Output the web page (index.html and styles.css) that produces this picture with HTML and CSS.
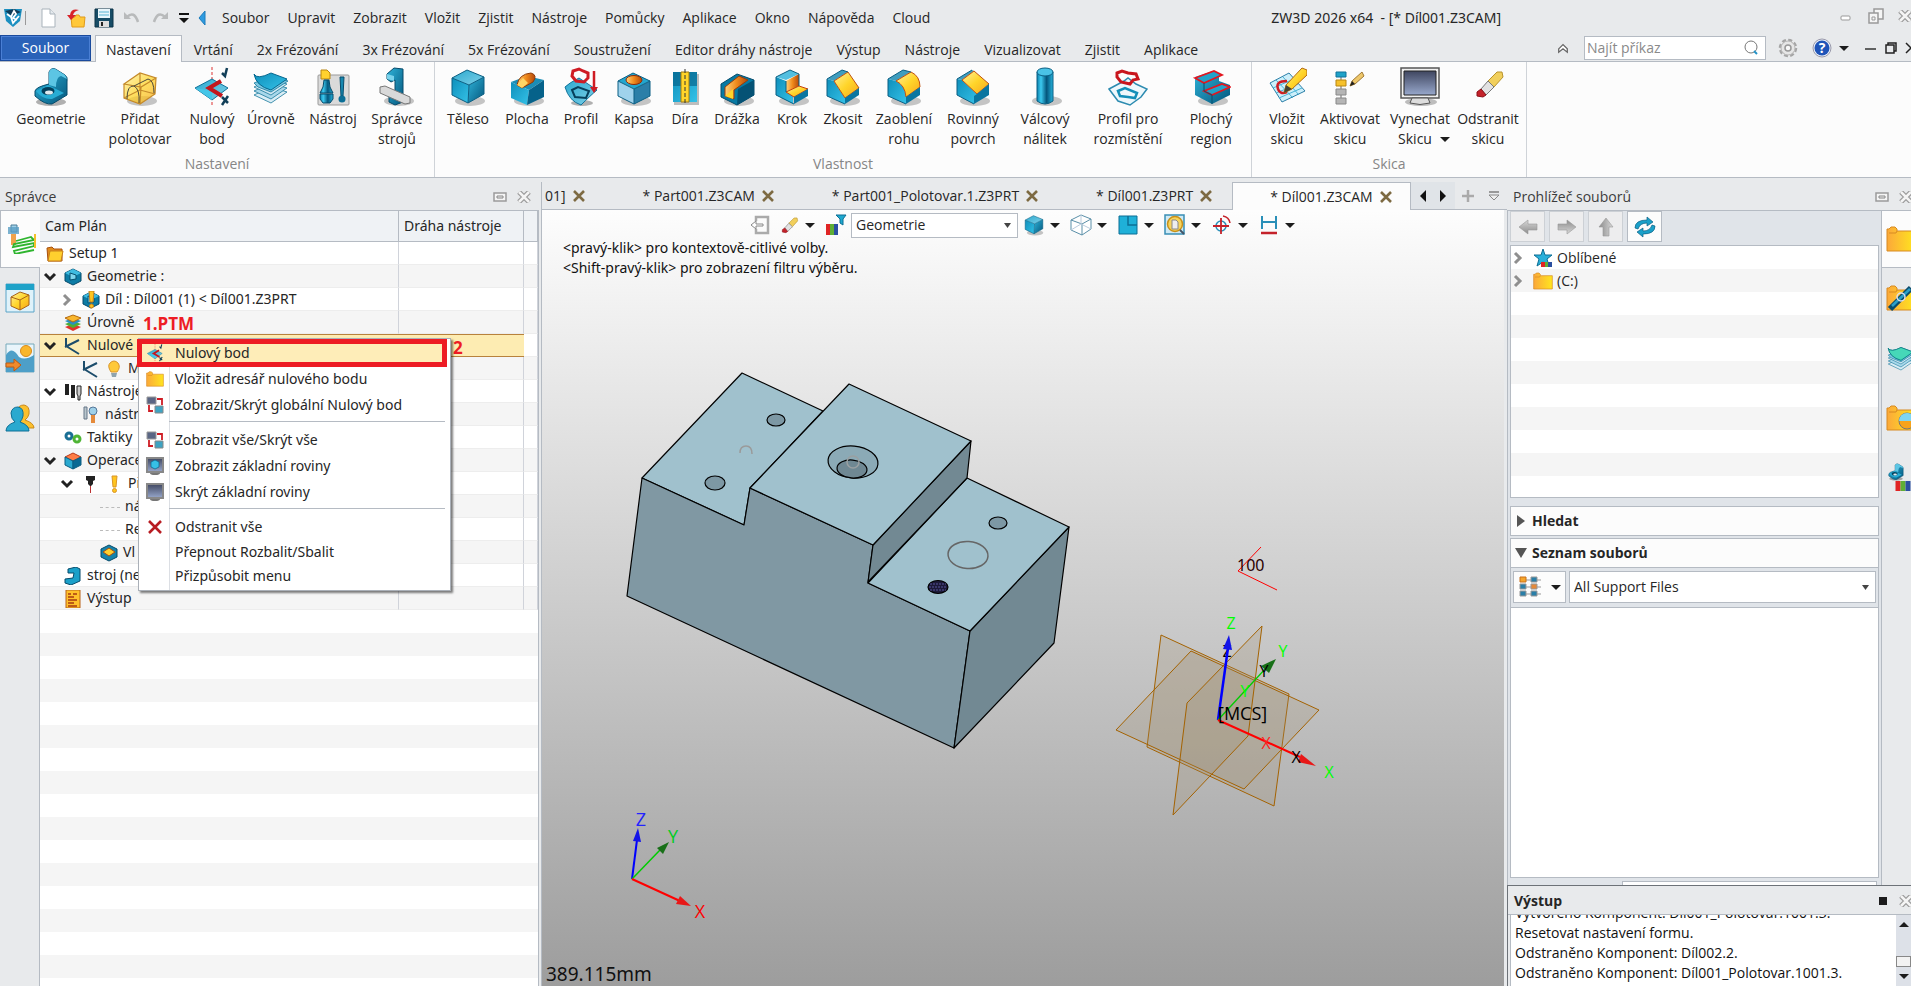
FILE: index.html
```html
<!DOCTYPE html>
<html lang="cs">
<head>
<meta charset="utf-8">
<title>ZW3D 2026 x64 - [* Díl001.Z3CAM]</title>
<link rel="stylesheet" href="styles.css">
</head>
<body>
<svg class="sprite" aria-hidden="true">
  <defs>
    <linearGradient id="gTop" x1="0" y1="0" x2="1" y2="1"><stop offset="0" stop-color="#2aa9cf"/><stop offset="1" stop-color="#7fd0e8"/></linearGradient>
    <linearGradient id="gL" x1="0" y1="0" x2="1" y2="1"><stop offset="0" stop-color="#0e8fbb"/><stop offset="1" stop-color="#35c2e8"/></linearGradient>
    <linearGradient id="gR" x1="0" y1="0" x2="1" y2="1"><stop offset="0" stop-color="#2fb4da"/><stop offset="1" stop-color="#04567c"/></linearGradient>
    <linearGradient id="gY" x1="0" y1="0" x2="1" y2="1"><stop offset="0" stop-color="#fff0a0"/><stop offset=".5" stop-color="#ffd52a"/><stop offset="1" stop-color="#f7a61c"/></linearGradient>
    <linearGradient id="gO" x1="0" y1="0" x2="1" y2="0"><stop offset="0" stop-color="#ffd27a"/><stop offset=".5" stop-color="#f08a1c"/><stop offset="1" stop-color="#b5480a"/></linearGradient>
    <linearGradient id="gF" x1="0" y1="0" x2="1" y2="0"><stop offset="0" stop-color="#fba83a"/><stop offset="1" stop-color="#ffe51f"/></linearGradient>
    <linearGradient id="gCyl" x1="0" y1="0" x2="1" y2="0"><stop offset="0" stop-color="#0a7fab"/><stop offset=".25" stop-color="#3ccaf0"/><stop offset=".6" stop-color="#04567c"/><stop offset="1" stop-color="#25b2dc"/></linearGradient>
    <linearGradient id="gM" x1="0" y1="0" x2="0" y2="1"><stop offset="0" stop-color="#3f4660"/><stop offset="1" stop-color="#98a8cc"/></linearGradient>
    <linearGradient id="gG" x1="0" y1="0" x2="0" y2="1"><stop offset="0" stop-color="#d8d8d8"/><stop offset="1" stop-color="#8c8c8c"/></linearGradient>
  </defs>
  <symbol id="shadow" viewBox="0 0 40 40"><ellipse cx="22" cy="34" rx="15" ry="5" fill="#000" opacity=".22"/></symbol>
  <symbol id="cube" viewBox="0 0 40 40"><use href="#shadow"/><path d="M4 11 19 3 36 10 21 18Z" fill="url(#gTop)"/><path d="M4 11 21 18 20 36 4 28Z" fill="url(#gL)"/><path d="M21 18 36 10 36 27 20 36Z" fill="url(#gR)"/><path d="M4 11 19 3 36 10 36 27 20 36 4 28ZM4 11 21 18 36 10M21 18 20 36" fill="none" stroke="#0b5f83" stroke-width="1"/></symbol>
  <symbol id="bracket" viewBox="0 0 40 40"><ellipse cx="20" cy="35" rx="15" ry="4" fill="#000" opacity=".3"/><path d="M18 17V5Q21 -1 26 3L34 8Q37 10 36 15V28L21 37Q14 38 4 29V24Q5 20 18 17Z" fill="url(#gR)" stroke="#064b6b"/><path d="M18 5Q21 -1 26 3L34 8 36 12 30 9Q25 10 25 20L18 18Z" fill="#5cc5e4"/><path d="M5 24 17 18 33 26 21 32Q12 33 5 24Z" fill="#27acd4"/><ellipse cx="17" cy="24" rx="6.500" ry="4" fill="#04405c"/><ellipse cx="18" cy="25.500" rx="4" ry="2" fill="#dfe9ee"/></symbol>
  <symbol id="stock" viewBox="0 0 40 40"><use href="#shadow"/><path d="M4 17 20 6 36 11 35 27 20 37 4 31Z" fill="url(#gY)" opacity=".75"/><path d="M4 17 20 6 36 11 21 20ZM4 17V31L20 37 35 27 36 11M21 20 20 37M20 6V23L4 31M20 23 35 27" fill="none" stroke="#c58a2a" stroke-width="1.200"/><path d="M7 32Q7 18 14 19 20 22 19 36M14 19 28 12Q34 13 34 26" fill="none" stroke="#4c4a3c"/></symbol>
  <symbol id="origin" viewBox="0 0 40 40"><path d="M20 0V40" stroke="#d33" stroke-dasharray="3 2"/><path d="M3 21 20 12 36 21 20 33Z" fill="url(#gTop)" stroke="#11739b"/><path d="M3 21 20 33V24Z" fill="#45c6e8"/><path d="M29 14 17 21 30 29" fill="none" stroke="#c4161c" stroke-width="4"/><path d="M30 6 33 9 35 1M30 30 36 36M36 29 30 38" fill="none" stroke="#123f58" stroke-width="2.500"/></symbol>
  <symbol id="levels" viewBox="0 0 40 40"><g stroke="#19789c" stroke-width=".8"><path d="M3 28 20 20 36 25 20 36Z" fill="#d9edf5"/><path d="M3 24 20 16 36 21 20 32Z" fill="#a9d8ea"/><path d="M3 20 20 12 36 17 20 28Z" fill="#cfe8f2"/><path d="M3 16 20 9 37 14 20 25 7 20Z" fill="#7cc7e0"/></g><path d="M3 7Q6 13 20 6L36 12 20 23Q5 19 3 7Z" fill="url(#gL)" stroke="#06688f"/></symbol>
  <symbol id="toolset" viewBox="0 0 40 40"><rect x="5" y="8" width="31" height="30" rx="1" fill="#dadada" stroke="#999"/><path d="M8 3H14L17 6V12H8Z" fill="#ffd22e" stroke="#b88612"/><path d="M11 13H16L17 20 20 26H7L10 20ZM7 27H20V32L17 36H10L7 32Z" fill="url(#gCyl)" stroke="#064b6b"/><path d="M27 10H31L30 29H28Z" fill="#1788b0" stroke="#064b6b"/><circle cx="29" cy="32" r="3.500" fill="#0b6e96"/></symbol>
  <symbol id="machine" viewBox="0 0 40 40"><use href="#shadow"/><path d="M10 7 17 1 26 2V35L18 38 12 35V29H18V13L14 15 10 12Z" fill="url(#gR)" stroke="#064b6b"/><path d="M10 7 17 9V14L10 12Z" fill="#7ad3ec"/><path d="M3 20 8 19 33 30V36L28 37 3 26Z" fill="#d9d9d9" stroke="#777"/></symbol>
  <symbol id="surf" viewBox="0 0 40 40"><use href="#shadow"/><path d="M4 15 20 9 37 13 22 23Z" fill="#1b8db5"/><path d="M4 15 22 23 20 38 4 31Z" fill="url(#gL)"/><path d="M22 23 37 13V30L20 38Z" fill="#06628a"/><path d="M10 18Q12 7 24 6 31 8 26 15L15 21Z" fill="url(#gO)" stroke="#8d3a08"/><path d="M10 18 16 11 21 16 15 21Z" fill="#ffd564"/></symbol>
  <symbol id="profile" viewBox="0 0 40 40"><ellipse cx="21" cy="36" rx="11" ry="3" fill="#000" opacity=".3"/><path d="M4 20Q8 16 18 11L36 23Q30 28 20 38 8 34 4 20Z" fill="url(#gTop)" stroke="#11739b"/><path d="M11 23 17 20 28 24 25 31 14 30Z" fill="none" stroke="#06405c" stroke-width="2"/><path d="M12 4 18 2 22 4 27 6 27 11 23 15 15 14 11 9Z" fill="none" stroke="#cf1c24" stroke-width="3"/><path d="M33 4V21" stroke="#cf1c24" stroke-width="2.500"/><path d="M29 20H37L33 26Z" fill="#cf1c24"/></symbol>
  <symbol id="pocket" viewBox="0 0 40 40"><use href="#shadow"/><path d="M4 14 19 6 36 14 20 22Z" fill="#23a6ce"/><path d="M4 14 20 22V37L4 29Z" fill="#9fd2ec"/><path d="M20 22 36 14V29L20 37Z" fill="#2b7fa8"/><path d="M4 14 19 6 36 14 20 22ZV29L20 37 36 29V14M20 22V37" fill="none" stroke="#0b5f83"/><ellipse cx="20" cy="13" rx="8" ry="4.500" fill="url(#gO)" stroke="#8d2a08"/></symbol>
  <symbol id="hole" viewBox="0 0 40 40"><rect x="9" y="7" width="25" height="31" fill="#000" opacity=".25"/><path d="M8 5H32V35H8Z" fill="url(#gL)"/><path d="M8 5H32V19H8Z" fill="#06628a" opacity=".65"/><path d="M16 5H24V35H16Z" fill="#ffd52a" stroke="#a37a10"/><path d="M20 2V38" stroke="#333" stroke-dasharray="4 2"/></symbol>
  <symbol id="slot" viewBox="0 0 40 40"><use href="#shadow"/><path d="M4 17 20 7 37 13V28L20 38 4 30Z" fill="#087aa3" stroke="#064b6b"/><path d="M21 22 37 13V28L20 38Z" fill="#055275"/><path d="M8 20 22 9 31 13 17 23V32L8 29Z" fill="url(#gO)" stroke="#9c3c08"/><path d="M8 29 16 22V32Z" fill="#ffd52a"/></symbol>
  <symbol id="step" viewBox="0 0 40 40"><use href="#shadow"/><path d="M4 10 18 3 27 7 14 13Z" fill="#52bfe0"/><path d="M4 10 14 14V25L21 29V37L4 28Z" fill="url(#gL)"/><path d="M14 14 27 7V19L14 25Z" fill="url(#gO)"/><path d="M14 25 27 19 36 22 22 30Z" fill="url(#gY)" stroke="#c4400c"/><path d="M22 30 36 22V29L22 37Z" fill="#0a76a0"/><path d="M4 10 18 3 27 7V19M14 14V25M4 10V28L22 37" fill="none" stroke="#0b5f83"/></symbol>
  <symbol id="chamfer" viewBox="0 0 40 40"><use href="#shadow"/><path d="M4 12 19 3 25 5 11 14Z" fill="#3f9dbe"/><path d="M4 12 11 14 22 31V37L4 29Z" fill="url(#gL)"/><path d="M11 14 25 5 36 21 22 31Z" fill="url(#gY)" stroke="#c0500f"/><path d="M22 31 36 21V28L22 37Z" fill="#0a76a0"/><path d="M4 12 19 3 25 5M4 12V29L22 37" fill="none" stroke="#0b5f83"/></symbol>
  <symbol id="fillet" viewBox="0 0 40 40"><use href="#shadow"/><path d="M4 12 19 3 27 5 12 14Z" fill="#3f9dbe"/><path d="M4 12 12 14Q21 18 22 29V37L4 29Z" fill="url(#gL)"/><path d="M12 14 27 5Q36 9 36 20L22 30Q21 18 12 14Z" fill="url(#gY)" stroke="#c0500f"/><path d="M22 30 36 20V28L22 37Z" fill="#0a76a0"/><path d="M4 12 19 3 27 5M4 12V29L22 37" fill="none" stroke="#0b5f83"/></symbol>
  <symbol id="planar" viewBox="0 0 40 40"><use href="#shadow"/><path d="M4 12 19 3 21 4 9 13Z" fill="#3f9dbe"/><path d="M4 12 9 13 25 28 21 37 4 28Z" fill="url(#gL)"/><path d="M9 13 21 4 36 17 24 27Z" fill="url(#gY)" stroke="#c0500f"/><path d="M24 27 36 17V28L21 37V29Z" fill="#0a76a0"/><path d="M4 12 19 3M4 12V28L21 37" fill="none" stroke="#0b5f83"/></symbol>
  <symbol id="boss" viewBox="0 0 40 40"><use href="#shadow"/><path d="M12 5V34Q20 40 28 34V5Z" fill="url(#gCyl)" stroke="#0b5f83"/><ellipse cx="20" cy="5" rx="8" ry="4" fill="#4ac3e6" stroke="#0b5f83"/></symbol>
  <symbol id="pattern" viewBox="0 0 40 40"><path d="M1 22 16 14 20 11 28 17 39 22 33 30 22 38 10 34Z" fill="#eef8fc" stroke="#2c8bb0" stroke-width="1.500"/><path d="M10 24 17 21 29 26 27 31 20 30 12 29Z" fill="none" stroke="#138fb8" stroke-width="2.500"/><path d="M9 6 14 4 20 6 28 7 30 12 25 13 22 17 13 15 9 10Z" fill="none" stroke="#c9161d" stroke-width="3"/></symbol>
  <symbol id="flat" viewBox="0 0 40 40"><use href="#shadow"/><path d="M4 10V28L21 37 39 28V18L28 14V8L22 4Z" fill="url(#gR)"/><path d="M4 11 23 4 31 8 13 16ZM13 24 31 17 39 20 21 28Z" fill="#23a3c9" stroke="#e3161f" stroke-width="1.800"/><path d="M13 16V24L21 28V37" fill="none" stroke="#07506f"/></symbol>
  <symbol id="insertsk" viewBox="0 0 40 40"><path d="M3 16 22 6 38 24 15 35Z" fill="#cdeffa" stroke="#2b7fa8"/><path d="M9 13 26 31M16 10 32 28M6 21 27 12M9 26 31 17M12 31 35 21" stroke="#49b4d6" fill="none"/><path d="M20 14Q8 14 11 22 13 28 20 25" fill="none" stroke="#cf1c24" stroke-width="2.500"/><path d="M17 26 19 18 35 1 40 3V8L25 22Z" fill="url(#gY)" stroke="#b46a10"/><path d="M17 26 19 18 25 22Z" fill="#443"/></symbol>
  <symbol id="activesk" viewBox="0 0 40 40"><path d="M11 8V36" stroke="#666"/><path d="M6 5H16V10H6Z" fill="#1fa2c8" stroke="#11739b"/><path d="M6 13H16V19H6Z" fill="#f6c12b" stroke="#b88612"/><path d="M6 22H16V28H6ZM6 31H16V37H6Z" fill="#b5b5b5" stroke="#888"/><path d="M20 19 22 14 32 5 34 9 25 17Z" fill="#eec76a" stroke="#a07a35"/><path d="M20 19 22 14 25 17Z" fill="#222"/></symbol>
  <symbol id="monitor" viewBox="0 0 40 40"><ellipse cx="21" cy="35" rx="16" ry="4" fill="#000" opacity=".25"/><path d="M1 1H39V31H1Z" fill="#f0f0f0" stroke="#555" stroke-width="1.500"/><path d="M4 4H36V28H4Z" fill="url(#gM)" stroke="#222"/><path d="M12 31H28L30 36Q20 39 10 36Z" fill="#ddd" stroke="#555"/></symbol>
  <symbol id="eraser" viewBox="0 0 40 40"><path d="M20 14 29 5 34 5 35 10 26 20Z" fill="#f1cf5c" stroke="#b9932d"/><path d="M13 22 20 14 26 20 18 28Z" fill="#e2e2e2" stroke="#777"/><path d="M13 22 18 28 15 30 9 29 9 25Z" fill="#c4222a" stroke="#8d1018"/></symbol>
  <symbol id="folder" viewBox="0 0 30 26"><path d="M1 3H3L5 1H9L11 3V5H29V25H1Z" fill="url(#gF)" stroke="#d78a22"/><path d="M3 7H10L11 5" fill="none" stroke="#d78a22"/></symbol>
  <symbol id="xclose" viewBox="0 0 14 12"><path d="M2 1 12 11M12 1 2 11" stroke="#9b9b9b" stroke-width="5"/><path d="M2 1 12 11M12 1 2 11" stroke="#f4f4f4" stroke-width="2.500"/></symbol>
  <symbol id="pin" viewBox="0 0 14 10"><path d="M1 1H13V9H1Z" fill="#f5f5f5" stroke="#9b9b9b" stroke-width="1.500"/><path d="M4 4H10V6H4Z" fill="#eee" stroke="#888"/></symbol>
  <symbol id="tabx" viewBox="0 0 12 12"><path d="M1 1 11 11M11 1 1 11" stroke="#7d6a42" stroke-width="2.600"/></symbol>
  <symbol id="caret" viewBox="0 0 10 5"><path d="M0 0H10L5 5Z" fill="#1c1c1c"/></symbol>
  <symbol id="down" viewBox="0 0 14 10"><path d="M2 2 7 7 12 2" fill="none" stroke="#222" stroke-width="3"/></symbol>
  <symbol id="right" viewBox="0 0 10 14"><path d="M2 2 7 7 2 12" fill="none" stroke="#8f8f8f" stroke-width="3"/></symbol>
  <symbol id="hex" viewBox="0 0 18 18"><path d="M1 5 9 1 17 5V13L9 17 1 13Z" fill="#0d7ca5" stroke="#064b6b"/><path d="M1 5 9 1 17 5 9 9Z" fill="#3ebbe0"/><path d="M6 5 12 7V11L6 12Z" fill="#7fd6ee" stroke="#06506f"/></symbol>
  <symbol id="vee" viewBox="0 0 18 18"><path d="M2 1V10M1 10 15 3M2 9 15 17" fill="none" stroke="#1c4c6b" stroke-width="2"/></symbol>
  <symbol id="swap" viewBox="0 0 18 18"><path d="M1 1H10V8H1Z" fill="#5a6684" stroke="#999"/><path d="M9 10H17V17H9Z" fill="#3fa3c2" stroke="#888"/><path d="M11 3H16V9M3 9V15H7" fill="none" stroke="#cf1c24" stroke-width="1.800"/></symbol>
  <symbol id="mon" viewBox="0 0 18 18"><ellipse cx="9" cy="16" rx="5" ry="2" fill="#777"/><path d="M1 1H17V15H1Z" fill="url(#gM)" stroke="#888" stroke-width="2"/></symbol>
  <symbol id="arrow" viewBox="0 0 20 20"><path d="M1 10 10 3V7H19V13H10V17Z" fill="url(#gG)" stroke="#999" stroke-width=".6"/></symbol>
  <symbol id="rgb" viewBox="0 0 15 10"><path d="M0 0H5V10H0Z" fill="#e02424"/><path d="M5 0H10V10H5Z" fill="#5fae35"/><path d="M10 0H15V10H10Z" fill="#2b4fa0"/></symbol>
</svg>

<header class="titlebar">
  <svg class="i20" viewBox="0 0 20 20"><path d="M1 1H19L17 13 10 19 3 13Z" fill="#1b8fc0"/><path d="M2 3 11 1 18 4 9 8Z" fill="#103c58"/><path d="M4 6 8 9 11 3 13 6 10 10 14 12M8 9 10 15 16 8" stroke="#fff" stroke-width="1.800" fill="none"/></svg>
  <span class="vline"></span>
  <nav class="quick">
    <button aria-label="Nový"><svg class="i20" viewBox="0 0 20 20"><path d="M4 1H12L17 6V19H4Z" fill="#fff" stroke="#a9b3bb"/><path d="M12 1V6H17" fill="#e5eaee" stroke="#a9b3bb"/></svg></button>
    <button aria-label="Otevřít"><svg class="i20" viewBox="0 0 20 20"><path d="M5 9H9L10 7H13L14 9H19L18 19H6Z" fill="#ffc83a" stroke="#e09a1a"/><path d="M13 2Q5 0 4 7H1L5 12 10 7H7Q8 3 13 2Z" fill="#d8232a"/></svg></button>
    <button aria-label="Uložit"><svg class="i20" viewBox="0 0 20 20"><path d="M1 1H19V19H1Z" fill="#174c66" stroke="#0c3246"/><path d="M4 1H16V10H4Z" fill="#eaf6fb"/><path d="M5 4H15M5 7H15" stroke="#5bb5d4"/><path d="M5 13H15V19H5Z" fill="#ddd"/><path d="M7 14H9V18H7Z" fill="#222"/></svg></button>
    <button aria-label="Zpět"><svg class="i20" viewBox="0 0 20 20"><path d="M5 9Q12 2 16 14" fill="none" stroke="#b8babb" stroke-width="2.500"/><path d="M2 4V11H9Z" fill="#b8babb"/></svg></button>
    <button aria-label="Znovu"><svg class="i20" viewBox="0 0 20 20"><path d="M15 9Q8 2 4 14" fill="none" stroke="#b8babb" stroke-width="2.500"/><path d="M18 4V11H11Z" fill="#b8babb"/></svg></button>
    <button class="narrow" aria-label="Další příkazy"><svg class="i12" viewBox="0 0 12 12"><path d="M1 1H11V3H1ZM1 6H11L6 11Z" fill="#111"/></svg></button>
    <button class="back" aria-label="Skrýt nabídku"><svg class="tri" viewBox="0 0 8 16"><path d="M1 8 7 1V15Z" fill="#2e9be0" stroke="#1c7cbc"/></svg></button>
  </nav>
  <nav class="menubar">
    <a href="#">Soubor</a><a href="#">Upravit</a><a href="#">Zobrazit</a><a href="#">Vložit</a><a href="#">Zjistit</a><a href="#">Nástroje</a><a href="#">Pomůcky</a><a href="#">Aplikace</a><a href="#">Okno</a><a href="#">Nápověda</a><a href="#">Cloud</a>
  </nav>
  <h1 class="apptitle">ZW3D 2026 x64 &nbsp;- [* Díl001.Z3CAM]</h1>
  <div class="winbtns">
    <button aria-label="Minimalizovat"><svg class="i16" viewBox="0 0 16 16"><rect x="3" y="8" width="9" height="4" rx="1" fill="#fff" stroke="#999"/></svg></button>
    <button aria-label="Obnovit"><svg class="i16" viewBox="0 0 16 16"><path d="M6 1H15V11H6Z" fill="#f5f5f5" stroke="#999" stroke-width="1.500"/><path d="M1 5H10V15H1Z" fill="#f5f5f5" stroke="#999" stroke-width="1.500"/><path d="M4 9H7V12H4Z" fill="none" stroke="#999"/></svg></button>
    <button aria-label="Zavřít"><svg class="i14" viewBox="0 0 14 12"><use href="#xclose"/></svg></button>
  </div>
</header>

<div class="tabbar">
  <button class="filebtn">Soubor</button>
  <nav class="rtabs">
    <button class="rtab on">Nastavení</button><button class="rtab">Vrtání</button><button class="rtab">2x Frézování</button><button class="rtab">3x Frézování</button><button class="rtab">5x Frézování</button><button class="rtab">Soustružení</button><button class="rtab">Editor dráhy nástroje</button><button class="rtab">Výstup</button><button class="rtab">Nástroje</button><button class="rtab">Vizualizovat</button><button class="rtab">Zjistit</button><button class="rtab">Aplikace</button>
  </nav>
  <div class="tabtools">
    <button class="collapse" aria-label="Sbalit pás"><svg class="i14" viewBox="0 0 14 14"><path d="M2 8 7 3 12 8V12L7 8 2 12Z" fill="#fff" stroke="#666" stroke-width="1.500"/></svg></button>
    <div class="search"><input type="text" placeholder="Najít příkaz" aria-label="Najít příkaz"><svg class="i16" viewBox="0 0 16 16"><circle cx="8" cy="7" r="6" fill="none" stroke="#777"/><path d="M11 11 14 14" stroke="#2493c8" stroke-width="2"/></svg></div>
    <button class="gear" aria-label="Nastavení"><svg class="i20" viewBox="0 0 20 20"><circle cx="10" cy="10" r="8" fill="#ececec" stroke="#a5a5a5" stroke-width="2.500" stroke-dasharray="4 2.280"/><circle cx="10" cy="10" r="7" fill="#e6e6e6" stroke="#b5b5b5"/><circle cx="10" cy="10" r="3" fill="#f8f8f8" stroke="#999" stroke-width="1.500"/></svg></button>
    <button class="help" aria-label="Nápověda"><svg class="i20" viewBox="0 0 20 20"><circle cx="10" cy="10" r="9" fill="#e8eef8" stroke="#99a"/><circle cx="10" cy="10" r="7.500" fill="#1f54b8"/><text x="10" y="15" text-anchor="middle" class="qmark">?</text></svg><svg class="caret"><use href="#caret"/></svg></button>
    <button aria-label="Minimalizovat okno"><svg class="i12" viewBox="0 0 12 12"><path d="M0 7H11" stroke="#333" stroke-width="1.500"/></svg></button>
    <button aria-label="Obnovit okno"><svg class="i12" viewBox="0 0 12 12"><path d="M3 3V1H11V9H9M1 3H9V11H1Z" fill="none" stroke="#222" stroke-width="1.500"/></svg></button>
    <button aria-label="Zavřít okno"><svg class="i12" viewBox="0 0 12 12"><path d="M1 1 11 11M11 1 1 11" stroke="#222" stroke-width="1.500"/></svg></button>
  </div>
</div>

<section class="ribbon">
  <div class="group">
    <div class="cmds g-setup">
      <button><svg><use href="#bracket"/></svg>Geometrie</button>
      <button><svg><use href="#stock"/></svg>Přidat<br>polotovar</button>
      <button><svg><use href="#origin"/></svg>Nulový<br>bod</button>
      <button><svg><use href="#levels"/></svg>Úrovně</button>
      <button><svg><use href="#toolset"/></svg>Nástroj</button>
      <button><svg><use href="#machine"/></svg>Správce<br>strojů</button>
    </div>
    <div class="gname">Nastavení</div>
  </div>
  <div class="group">
    <div class="cmds g-feature">
      <button><svg><use href="#cube"/></svg>Těleso</button>
      <button><svg><use href="#surf"/></svg>Plocha</button>
      <button><svg><use href="#profile"/></svg>Profil</button>
      <button><svg><use href="#pocket"/></svg>Kapsa</button>
      <button><svg><use href="#hole"/></svg>Díra</button>
      <button><svg><use href="#slot"/></svg>Drážka</button>
      <button><svg><use href="#step"/></svg>Krok</button>
      <button><svg><use href="#chamfer"/></svg>Zkosit</button>
      <button><svg><use href="#fillet"/></svg>Zaoblení<br>rohu</button>
      <button><svg><use href="#planar"/></svg>Rovinný<br>povrch</button>
      <button><svg><use href="#boss"/></svg>Válcový<br>nálitek</button>
      <button><svg><use href="#pattern"/></svg>Profil pro<br>rozmístění</button>
      <button><svg><use href="#flat"/></svg>Plochý<br>region</button>
    </div>
    <div class="gname">Vlastnost</div>
  </div>
  <div class="group">
    <div class="cmds g-sketch">
      <button><svg><use href="#insertsk"/></svg>Vložit<br>skicu</button>
      <button><svg><use href="#activesk"/></svg>Aktivovat<br>skicu</button>
      <button><svg><use href="#monitor"/></svg>Vynechat<br><span class="drop">Skicu<svg class="caret"><use href="#caret"/></svg></span></button>
      <button><svg><use href="#eraser"/></svg>Odstranit<br>skicu</button>
    </div>
    <div class="gname">Skica</div>
  </div>
</section>

<main class="work">
  <aside class="manager">
    <div class="ptitle"><span>Správce</span><button aria-label="Připnout"><svg class="i14" viewBox="0 0 14 12"><use href="#pin"/></svg></button><button aria-label="Zavřít panel"><svg class="i14" viewBox="0 0 14 12"><use href="#xclose"/></svg></button></div>
    <div class="mbody">
      <nav class="strip">
        <button class="on" aria-label="Cam plán"><svg class="i30" viewBox="0 0 30 30"><path d="M5 1H11V8H5Z" fill="#9fd0e8" stroke="#4b7c98"/><path d="M2 3H13V10H2Z" fill="#5a9fc4" opacity=".8"/><path d="M5 10H10V21H5Z" fill="#f0a24a"/><path d="M10 17 25 13 28 16 8 20 7 23 28 19V22L8 27 9 30 28 26" fill="none" stroke="#2fb52f" stroke-width="1.800"/><path d="M29 10V24" stroke="#f5c02a" stroke-width="2"/></svg></button>
        <button aria-label="Díl"><svg class="i30" viewBox="0 0 30 30"><path d="M1 1H29V29H1Z" fill="#dff2fa" stroke="#5ba4c8"/><path d="M1 1H29V7H1Z" fill="#1fa2c8"/><path d="M6 14 15 9 24 12 24 22 15 27 6 23Z" fill="url(#gY)" stroke="#a8621a"/><path d="M6 14 15 17 24 12M15 17V27" fill="none" stroke="#a8621a"/></svg></button>
        <button aria-label="Vizualizace"><svg class="i30" viewBox="0 0 30 30"><path d="M1 1H29V29H1Z" fill="#e9f5fb" stroke="#7ab"/><path d="M1 12Q7 2 14 14 20 18 29 12V29H1Z" fill="#4d9fc8"/><circle cx="21" cy="8" r="5.500" fill="#f9b62c" stroke="#d98a1a"/><path d="M1 20H9V16L16 22 9 28V24H1Z" fill="#f08a2c" stroke="#c25a10"/></svg></button>
        <button aria-label="Uživatelé"><svg class="i30" viewBox="0 0 30 30"><path d="M12 8Q13 2 19 2 25 3 24 11 23 15 20 17 29 20 29 25H12Z" fill="#fbc02d" stroke="#c98a1a"/><path d="M6 10Q7 4 13 4 19 5 18 13 17 17 15 19 24 22 24 28H1Q1 22 10 19 6 16 6 10Z" fill="#2aa9cf" stroke="#0d6f95"/></svg></button>
      </nav>
      <div class="treebox">
        <table class="tree">
          <thead><tr><th>Cam Plán</th><th class="c2">Dráha nástroje</th><th class="c3"></th></tr></thead>
          <tbody>
            <tr><td class="d0"><svg class="i18" viewBox="0 0 18 18"><path d="M1 3 6 2 8 4H16V16H2Z" fill="#e08a1c" stroke="#a8500f"/><path d="M4 6H17L15 16H2Z" fill="#ffd02e" stroke="#c8801a"/></svg>Setup 1</td><td></td><td></td></tr>
            <tr><td class="d1"><svg class="tw"><use href="#down"/></svg><svg class="i18"><use href="#hex"/></svg>Geometrie :</td><td></td><td></td></tr>
            <tr><td class="d2"><svg class="tw closed"><use href="#right"/></svg><svg class="i18" viewBox="0 0 18 18"><use href="#hex"/><path d="M7 0H12L11 11H8Z" fill="#ffc51f" stroke="#c8801a"/><circle cx="9.500" cy="15" r="2" fill="#ffc51f" stroke="#c8801a"/></svg>Díl : Díl001 (1) &lt; Díl001.Z3PRT</td><td></td><td></td></tr>
            <tr><td class="d1"><span class="tw"></span><svg class="i18" viewBox="0 0 18 18"><path d="M1 13 9 10 17 13 9 17Z" fill="#e0352b"/><path d="M1 10 9 7 17 10 9 14Z" fill="#4fae35"/><path d="M1 7 9 4 17 7 9 11Z" fill="#2a8fc0"/><path d="M1 4 9 1 17 4 9 8Z" fill="#f9b62c" stroke="#b46a10"/></svg>Úrovně</td><td></td><td></td></tr>
            <tr class="sel"><td class="d1"><svg class="tw"><use href="#down"/></svg><svg class="i18"><use href="#vee"/></svg>Nulové</td><td></td><td></td></tr>
            <tr><td class="d2"><span class="tw"></span><svg class="i18"><use href="#vee"/></svg><svg class="i18" viewBox="0 0 18 18"><path d="M6 12Q2 6 5 3 9 -1 13 3 16 7 12 12Z" fill="#ffc93a" stroke="#d9952a"/><path d="M6 13H12L11 17H7Z" fill="#8fa3ad"/></svg>M</td><td></td><td></td></tr>
            <tr><td class="d1"><svg class="tw"><use href="#down"/></svg><svg class="i18" viewBox="0 0 18 18"><path d="M1 1H5V12H1ZM7 2H11V15H7Z" fill="#222"/><path d="M13 3H17V11L16 13V17H14V13L13 11Z" fill="#ccc" stroke="#222"/></svg>Nástroje</td><td></td><td></td></tr>
            <tr><td class="d2"><span class="tw"></span><svg class="i18" viewBox="0 0 18 18"><path d="M2 1H5V13H2Z" fill="#b9c6cd" stroke="#678"/><circle cx="11" cy="5" r="4" fill="#9fd0e8" stroke="#579"/><path d="M9 9H13V17H9Z" fill="#e58a3a"/></svg>nástroj</td><td></td><td></td></tr>
            <tr><td class="d1"><span class="tw"></span><svg class="i18" viewBox="0 0 18 18"><circle cx="5" cy="7" r="3" fill="none" stroke="#1a6f95" stroke-width="3"/><circle cx="13" cy="10" r="3" fill="none" stroke="#4fb535" stroke-width="3"/></svg>Taktiky</td><td></td><td></td></tr>
            <tr><td class="d1"><svg class="tw"><use href="#down"/></svg><svg class="i18" viewBox="0 0 18 18"><path d="M1 5 9 1 17 5 9 9Z" fill="#ff7d45" stroke="#b8391a"/><path d="M1 5 9 9V17L1 13Z" fill="#2aa9cf" stroke="#0b5f83"/><path d="M9 9 17 5V13L9 17Z" fill="#0a6a94" stroke="#0b5f83"/></svg>Operace</td><td></td><td></td></tr>
            <tr><td class="d2"><svg class="tw"><use href="#down"/></svg><svg class="i18" viewBox="0 0 18 18"><path d="M4 1H13V5L11 6V9L9 11H8L6 9V6L4 5Z" fill="#222"/><path d="M8.500 11V18" stroke="#b33"/></svg><svg class="i18" viewBox="0 0 18 18"><path d="M7 1H12L11 12H8Z" fill="#ffc51f" stroke="#d9952a"/><circle cx="9.500" cy="15.500" r="2" fill="#ffc51f" stroke="#d9952a"/></svg>Př</td><td></td><td></td></tr>
            <tr><td class="d3"><span class="dash"></span>ná</td><td></td><td></td></tr>
            <tr><td class="d3"><span class="dash"></span>Re</td><td></td><td></td></tr>
            <tr><td class="d3"><svg class="i18" viewBox="0 0 18 18"><path d="M1 5 9 1 17 5V13L9 17 1 13Z" fill="#1583ab" stroke="#064b6b"/><path d="M3 8 9 4 15 8 9 12Z" fill="#ffd02e" stroke="#a8500f"/></svg>Vl</td><td></td><td></td></tr>
            <tr><td class="d1"><span class="tw"></span><svg class="i18" viewBox="0 0 18 18"><path d="M4 2 12 0 16 2V14L7 18 1 16V12L9 11 10 6H4Z" fill="#1aa0c9" stroke="#064b6b"/></svg>stroj (ne</td><td></td><td></td></tr>
            <tr><td class="d1"><span class="tw"></span><svg class="i18" viewBox="0 0 18 18"><path d="M2 0H16V18H2Z" fill="#ffc02a" stroke="#b8621a"/><path d="M4 4H7M9 4H13M4 7H10M4 10H13M4 13H10M4 16H13" stroke="#a83a10" stroke-width="1.300"/></svg>Výstup</td><td></td><td></td></tr>
          </tbody>
        </table>
        <span class="note note1">1.PTM</span>
        <span class="note note2">2</span>
        <div class="ctx" role="menu">
          <button class="hot" role="menuitem"><svg class="i18"><use href="#origin"/></svg>Nulový bod</button>
          <button role="menuitem"><svg class="i18"><use href="#folder"/></svg>Vložit adresář nulového bodu</button>
          <button role="menuitem"><svg class="i18"><use href="#swap"/></svg>Zobrazit/Skrýt globální Nulový bod</button>
          <hr>
          <button role="menuitem"><svg class="i18"><use href="#swap"/></svg>Zobrazit vše/Skrýt vše</button>
          <button role="menuitem"><svg class="i18" viewBox="0 0 18 18"><use href="#mon"/><path d="M5 5 9 3 13 5V10L9 12 5 10Z" fill="#36c0e6" stroke="#06628a" stroke-width=".7"/></svg>Zobrazit základní roviny</button>
          <button role="menuitem"><svg class="i18"><use href="#mon"/></svg>Skrýt základní roviny</button>
          <hr>
          <button role="menuitem"><svg class="i18" viewBox="0 0 18 18"><path d="M3 3 15 15M15 3 3 15" stroke="#b81c22" stroke-width="2.600"/></svg>Odstranit vše</button>
          <button class="plain" role="menuitem">Přepnout Rozbalit/Sbalit</button>
          <button class="plain" role="menuitem">Přizpůsobit menu</button>
        </div>
      </div>
    </div>
  </aside>

  <section class="center">
    <nav class="docs">
      <button class="doc first">01]<svg class="i12"><use href="#tabx"/></svg></button>
      <button class="doc">* Part001.Z3CAM<svg class="i12"><use href="#tabx"/></svg></button>
      <button class="doc">* Part001_Polotovar.1.Z3PRT<svg class="i12"><use href="#tabx"/></svg></button>
      <button class="doc">* Díl001.Z3PRT<svg class="i12"><use href="#tabx"/></svg></button>
      <button class="doc on">* Díl001.Z3CAM<svg class="i12"><use href="#tabx"/></svg></button>
      <span class="docnav">
        <button aria-label="Předchozí"><svg class="i12" viewBox="0 0 12 12"><path d="M9 0V12L3 6Z" fill="#111"/></svg></button>
        <button aria-label="Další"><svg class="i12" viewBox="0 0 12 12"><path d="M3 0V12L9 6Z" fill="#111"/></svg></button>
      </span>
      <button class="dtool" aria-label="Nová karta"><svg class="plus" viewBox="0 0 14 14"><path d="M7 1V13M1 7H13" stroke="#aaa" stroke-width="2.500"/></svg></button>
      <button class="dtool" aria-label="Seznam karet"><svg class="i12" viewBox="0 0 12 12"><path d="M1 2H11" stroke="#999" stroke-width="2"/><path d="M1 5H11L6 10Z" fill="#eee" stroke="#888"/></svg></button>
    </nav>
    <div class="view">
      <svg class="scene" viewBox="542 210 962 776" preserveAspectRatio="xMinYMin slice">
        <g stroke="#000" stroke-width="1.200" stroke-linejoin="round">
          <path d="M742 373 823 411 750 488 744 525 642 478Z" fill="#a0c1cd"/>
          <path d="M642 478 744 525 750 488 873 545 868 583 970 631 954 748 627 596Z" fill="#8098a3"/>
          <path d="M970 631 1069 527 1054 643 954 748Z" fill="#728993"/>
          <path d="M967 478 1069 527 970 631 868 583Z" fill="#a0c1cd"/>
          <path d="M971 441 967 478 868 582 873 545Z" fill="#728993"/>
          <path d="M849 384 971 441 873 545 750 488Z" fill="#a0c1cd"/>
          <ellipse cx="776" cy="420" rx="9" ry="6" fill="#7d98a4"/>
          <ellipse cx="715" cy="483" rx="10" ry="7" fill="#7d98a4"/>
          <ellipse cx="998" cy="523" rx="9" ry="6" fill="#7d98a4"/>
          <ellipse cx="853" cy="462" rx="25" ry="16" transform="rotate(5 853 462)" fill="#8baab6"/>
          <ellipse cx="852" cy="469" rx="15" ry="9" transform="rotate(5 852 469)" fill="#6f8893"/>
          <ellipse cx="938" cy="587" rx="10" ry="6.500" fill="#1c1a38"/>
          <path d="M930 584H946M929 587H947M930 590H946" stroke="#56539a" stroke-width="1" stroke-dasharray="2 1"/>
        </g>
        <ellipse cx="968" cy="555" rx="20" ry="13.500" transform="rotate(4 968 555)" fill="none" stroke="#666" stroke-width="1.500"/>
        <path d="M740 453Q740 446 746 446 752 446 752 454" fill="none" stroke="#9a9a9a" stroke-width="1.500"/>
        <circle cx="853" cy="462" r="6" fill="none" stroke="#9aa0a2" stroke-width="1.500"/>
        <path d="M1261 547 1238 571 1277 590" fill="none" stroke="#f00"/>
        <g fill="#a08c6c" fill-opacity=".22" stroke="#a46200" stroke-width="1">
          <path d="M1161 635 1289 694 1274 806 1147 747Z"/>
          <path d="M1191 651 1319 710 1244 789 1116 730Z"/>
          <path d="M1262 626 1248 736 1173 815 1187 703Z"/>
        </g>
        <g class="axis" text-anchor="middle"><text x="1227" y="657">Z</text></g>
        <path d="M1218 720 1228 648" stroke="#00f" stroke-width="2.500"/><path d="M1229 635 1232 650 1223 649Z" fill="#1414e8"/>
        <path d="M1218 720 1266 668" stroke="#0c0" stroke-width="1.300"/><path d="M1276 659 1269 673 1261 666Z" fill="#187018"/>
        <path d="M1218 720 1300 757" stroke="#f00" stroke-width="2"/><path d="M1316 766 1298 762 1301 754Z" fill="#e81818"/>
        <g class="axis" text-anchor="middle">
          <text x="1231" y="629" fill="#0f0">Z</text><text x="1283" y="657" fill="#0f0">Y</text><text x="1329" y="778" fill="#0f0">X</text>
          <text x="1264" y="677">Y</text><text x="1245" y="697" fill="#0f0">Y</text><text x="1266" y="749" fill="#f22">X</text><text x="1296" y="763">X</text>
        </g>
        <text class="dim" x="1237" y="571">100</text>
        <text class="mcs" x="1218" y="720">[MCS]</text>
        <path d="M632 879 637 840" stroke="#00f" stroke-width="2"/><path d="M638 828 641 842 633 841Z" fill="#1414e8"/>
        <path d="M632 879 660 850" stroke="#0c0" stroke-width="1.500"/><path d="M669 842 663 854 657 848Z" fill="#187018"/>
        <path d="M632 879 680 901" stroke="#f00" stroke-width="2"/><path d="M691 906 676 904 680 896Z" fill="#e81818"/>
        <g class="triad" text-anchor="middle"><text x="641" y="826" fill="#22f">Z</text><text x="673" y="843" fill="#0c2">Y</text><text x="700" y="918" fill="#f00">X</text></g>
      </svg>
      <div class="vtools">
        <button aria-label="Odejít"><svg class="i20" viewBox="0 0 20 20"><path d="M6 6V2H18V18H6V14" fill="none" stroke="#aaa" stroke-width="2.500"/><path d="M1 10 6 6V9H13V11H6V14Z" fill="#fff" stroke="#888"/></svg></button>
        <button class="dd" aria-label="Guma"><svg class="i20" viewBox="5 0 34 34"><use href="#eraser" width="40" height="40"/></svg><svg class="caret"><use href="#caret"/></svg></button>
        <button class="flt" aria-label="Filtr"><svg class="i22" viewBox="0 0 22 22"><path d="M1 10H5V21H1Z" fill="#e02424"/><path d="M5 10H9V21H5Z" fill="#5fae35"/><path d="M9 10H13V21H9Z" fill="#2b4fa0"/><path d="M11 1H21L18 5V11L15 9V5Z" fill="#1fa9cf" stroke="#0d6f95"/></svg></button>
        <select aria-label="Filtr výběru"><option>Geometrie</option></select>
        <button class="dd" aria-label="Stínování"><svg class="i22"><use href="#cube"/></svg><svg class="caret"><use href="#caret"/></svg></button>
        <button class="dd" aria-label="Drátový model"><svg class="i22" viewBox="0 0 22 22"><path d="M1 6 11 1 21 5V15L12 21 1 16ZM1 6 12 10 21 5M12 10V21" fill="#fff" stroke="#5a8fa8"/><path d="M11 1V10L1 16M11 10 21 15" fill="none" stroke="#bcd" /></svg><svg class="caret"><use href="#caret"/></svg></button>
        <button class="dd" aria-label="Pohled"><svg class="i22" viewBox="0 0 22 22"><path d="M2 2H20V20H2Z" fill="#1fb0d8" stroke="#0d6f95"/><path d="M11 2V11H20" fill="none" stroke="#0d6f95" stroke-width="1.500"/></svg><svg class="caret"><use href="#caret"/></svg></button>
        <button class="dd" aria-label="Lupa"><svg class="i22" viewBox="0 0 22 22"><path d="M1 1H20V20H1Z" fill="#cfeaf5" stroke="#3a8fb5" stroke-width="1.500"/><circle cx="11" cy="10" r="7.500" fill="#f7d45a" stroke="#c8901a" stroke-width="1.500"/><path d="M8 6H12L14 8V15H8Z" fill="#eee" stroke="#888"/><path d="M16 16 20 20" stroke="#456" stroke-width="2"/></svg><svg class="caret"><use href="#caret"/></svg></button>
        <button class="dd" aria-label="Střed"><svg class="i22" viewBox="0 0 22 22"><circle cx="10" cy="12" r="5" fill="none" stroke="#2a8fb8" stroke-width="1.500"/><path d="M10 4V20M2 12H18" stroke="#c4222a" stroke-width="1.800"/><path d="M12 2Q18 3 19 9" fill="none" stroke="#c4222a" stroke-width="1.500"/></svg><svg class="caret"><use href="#caret"/></svg></button>
        <button class="dd" aria-label="Kóta"><svg class="i22" viewBox="0 0 22 22"><path d="M4 2V15M18 2V15M4 8H18" stroke="#2a8fb8" stroke-width="2"/><path d="M3 19H19" stroke="#c4222a" stroke-width="2.500"/></svg><svg class="caret"><use href="#caret"/></svg></button>
      </div>
      <p class="hint">&lt;pravý-klik&gt; pro kontextově-citlivé volby.<br>&lt;Shift-pravý-klik&gt; pro zobrazení filtru výběru.</p>
      <div class="measure">389.115mm</div>
    </div>
  </section>

  <aside class="files">
    <div class="ptitle"><span>Prohlížeč souborů</span><button aria-label="Připnout"><svg class="i14" viewBox="0 0 14 12"><use href="#pin"/></svg></button><button aria-label="Zavřít panel"><svg class="i14" viewBox="0 0 14 12"><use href="#xclose"/></svg></button></div>
    <div class="fbody">
      <div class="fmain">
        <div class="fnav">
          <button aria-label="Zpět"><svg class="i20"><use href="#arrow"/></svg></button>
          <button aria-label="Vpřed"><svg class="i20 flip"><use href="#arrow"/></svg></button>
          <button aria-label="Nahoru"><svg class="i20 up"><use href="#arrow"/></svg></button>
          <button class="live" aria-label="Obnovit"><svg class="i22" viewBox="0 0 22 22"><path d="M1 12Q1 4 13 4V1L19 6 13 10V7Q6 7 4 13Z" fill="#1aa0c9" stroke="#0b5f83" stroke-width=".7"/><path d="M21 10Q21 18 9 18V21L3 16 9 12V15Q16 15 18 9Z" fill="#1aa0c9" stroke="#0b5f83" stroke-width=".7"/></svg></button>
        </div>
        <ul class="flist">
          <li><svg class="tw"><use href="#right"/></svg><svg class="i20" viewBox="0 0 20 20"><path d="M10 1 12 7 19 7 14 11 16 18 10 14 4 18 6 11 1 7 8 7Z" fill="#2ab0da" stroke="#0d6f95"/><path d="M8 14H12V19H8Z" fill="#e02424"/><path d="M12 14H15V19H12Z" fill="#5fae35"/><path d="M15 14H19V19H15Z" fill="#2b4fa0"/></svg>Oblíbené</li>
          <li><svg class="tw"><use href="#right"/></svg><svg class="i20"><use href="#folder"/></svg>(C:)</li>
        </ul>
        <button class="acc"><svg class="i12" viewBox="0 0 12 12"><path d="M2 0V12L10 6Z" fill="#555"/></svg>Hledat</button>
        <button class="acc open"><svg class="i12" viewBox="0 0 12 12"><path d="M0 1H12L6 11Z" fill="#555"/></svg>Seznam souborů</button>
        <div class="frow">
          <button aria-label="Zobrazení"><svg class="i22" viewBox="0 0 22 22"><path d="M1 4H22M1 11H22M1 18H22" stroke="#999"/><path d="M1 1H7V6H1Z" fill="#f5a52c" stroke="#c8701a"/><path d="M12 1H18V6H12ZM1 8H7V13H1ZM1 15H7V20H1ZM12 15H18V20H12Z" fill="#2a7fa8" stroke="#999"/><path d="M12 8H18V13H12Z" fill="#e58a3a" stroke="#999"/></svg><svg class="caret"><use href="#caret"/></svg></button>
          <select aria-label="Typ souborů"><option>All Support Files</option></select>
        </div>
        <div class="fempty"></div>
        <div class="fname"><input type="text" aria-label="Název souboru"></div>
      </div>
      <nav class="rstrip">
        <button class="on" aria-label="Složky"><svg class="i30"><use href="#folder"/></svg></button>
        <button aria-label="Knihovna"><svg class="i30" viewBox="0 0 30 30"><use href="#folder" width="30" height="28" y="1"/><path d="M4 26 25 5" stroke="#0b4c6b" stroke-width="6"/><path d="M6 23 24 6" stroke="#2a9fc8" stroke-width="2.500"/><circle cx="15" cy="14" r="4" fill="none" stroke="#dde" stroke-width="1.500"/></svg></button>
        <button aria-label="Vrstvy"><svg class="i30" viewBox="0 0 40 40"><use href="#levels"/><path d="M3 7Q6 13 20 6L36 12 20 23Q5 19 3 7Z" fill="#46d8b8" stroke="#0d7f80"/></svg></button>
        <button aria-label="Materiály"><svg class="i30" viewBox="0 0 30 30"><use href="#folder" width="30" height="28" y="1"/><circle cx="21" cy="18" r="8" fill="#f7a31c" stroke="#777"/><path d="M13 18A8 8 0 0 1 29 18Z" fill="#7fd6f2"/></svg></button>
        <button aria-label="Barvy"><svg class="i30" viewBox="0 0 30 30"><use href="#bracket" width="20" height="18"/><use href="#rgb" x="9" y="18" width="16" height="10"/></svg></button>
      </nav>
    </div>
    <section class="output">
      <div class="otitle"><h2>Výstup</h2><button aria-label="Ukotvit"><svg class="i12" viewBox="0 0 12 12"><path d="M2 2H10V10H2Z" fill="#1c1c1c"/></svg></button><button aria-label="Zavřít výstup"><svg class="i14" viewBox="0 0 14 12"><use href="#xclose"/></svg></button></div>
      <div class="obody">
        <div class="olog"><p>Vytvořeno Komponent: Díl001_Polotovar.1001.3.</p><p>Resetovat nastavení formu.</p><p>Odstraněno Komponent: Díl002.2.</p><p>Odstraněno Komponent: Díl001_Polotovar.1001.3.</p></div>
        <div class="oscroll"><svg class="caret upc"><use href="#caret"/></svg><span class="thumb"></span><svg class="caret"><use href="#caret"/></svg></div>
      </div>
    </section>
  </aside>
</main>
</body>
</html>
```
FILE: styles.css
```css
* { box-sizing: border-box; }
body {
  margin: 0;
  height: 100vh;
  display: flex;
  flex-direction: column;
  overflow: hidden;
  background: #e8eaec;
  color: #262626;
  font: 14px/20px "Open Sans", "Noto Sans", sans-serif;
}
button, input, select { font: inherit; color: inherit; }
button {
  display: inline-flex;
  align-items: center;
  justify-content: center;
  padding: 0;
  border: 0;
  background: none;
  white-space: nowrap;
}
svg { display: block; flex: none; }
.sprite { position: absolute; width: 0; height: 0; }
.i12 { width: 12px; height: 12px; }
.i14 { width: 14px; height: 12px; }
.i16 { width: 16px; height: 16px; }
.i18 { width: 18px; height: 18px; }
.i20 { width: 20px; height: 20px; }
.i22 { width: 22px; height: 22px; }
.i30 { width: 30px; height: 30px; }
.caret { width: 10px; height: 5px; }

/* title bar */
.titlebar { display: flex; align-items: center; height: 35px; flex: none; padding-left: 3px; position: relative; }
.vline { width: 1px; height: 14px; background: #999; margin: 0 12px 0 2px; }
.quick { display: flex; align-items: center; gap: 8px; }
.narrow { width: 12px; }
.tri { width: 8px; height: 16px; }
.menubar { display: flex; gap: 18px; margin-left: 16px; }
.menubar a { color: inherit; text-decoration: none; }
.apptitle { margin: 0 0 0 auto; padding-right: 410px; font: 400 14px/20px "Noto Sans", sans-serif; white-space: nowrap; }
.winbtns { position: absolute; right: -1px; top: 8px; display: flex; gap: 14px; align-items: center; }

/* ribbon tabs */
.tabbar { display: flex; height: 27px; flex: none; border-bottom: 1px solid #b5bbc3; white-space: nowrap; }
.filebtn { width: 91px; background: #2a62b8; border: 1px solid #1a4a9c; box-shadow: inset 0 0 0 1px #4a7fd4; color: #fff; }
.rtabs { display: flex; margin-left: 4px; }
.rtab { padding: 4px 12px 0; }
.rtab.on { background: #fcfcfc; border: 1px solid #b5bbc3; border-bottom: 0; height: 27px; padding: 2px 10px 0; }
.tabtools { display: flex; align-items: center; margin-left: auto; margin-right: -6px; gap: 8px; }
.collapse { margin-right: 6px; }
.search { display: flex; align-items: center; width: 182px; height: 24px; border: 1px solid #b5bbc3; background: #fff; padding: 0 6px 0 2px; margin-right: 4px; }
.search input { flex: 1; min-width: 0; border: 0; padding: 0; background: none; outline: 0; }
.search input::placeholder { color: #8a8a8a; opacity: 1; }
.gear { margin-right: 6px; }
.help { gap: 7px; margin-right: 8px; }
.qmark { font: bold 14px "Open Sans", sans-serif; fill: #fff; }

/* ribbon */
.ribbon { display: flex; height: 116px; flex: none; background: #fcfcfc; border-bottom: 1px solid #b5bbc3; }
.group { display: flex; flex-direction: column; border-right: 1px solid #cfd3d8; padding-top: 5px; }
.cmds { display: grid; height: 87px; }
.cmds button { display: block; text-align: center; align-self: start; }
.cmds button > svg { width: 40px; height: 40px; margin: 0 auto 2px; }
.g-setup { grid-template-columns: 102px 76px 68px 50px 74px 54px; padding-right: 10px; }
.g-feature { grid-template-columns: 56px 62px 46px 60px 42px 62px 48px 54px 68px 70px 74px 92px 74px; padding: 0 3px 0 5px; }
.g-sketch { grid-template-columns: 54px 72px 68px 68px; padding: 0 4px 0 8px; }
.gname { text-align: center; color: #868686; }
.drop { display: inline-flex; align-items: center; gap: 8px; margin-left: 8px; }

/* work area */
.work { flex: 1; min-height: 0; display: grid; grid-template-columns: 541px minmax(0, 1fr) 404px; padding-top: 4px; }
.ptitle { display: flex; align-items: center; height: 28px; gap: 10px; padding: 1px 10px 0 5px; color: #3c3c3c; }
.ptitle span { flex: 1; }

.manager { display: flex; flex-direction: column; min-height: 0; }
.mbody { flex: 1; display: flex; min-height: 0; }
.strip { width: 40px; display: flex; flex-direction: column; border-right: 1px solid #b5bbc3; }
.strip button { height: 60px; }
.strip .on { height: 58px; background: #fcfcfc; border: 1px solid #b5bbc3; border-right: 0; margin-right: -1px; }
.treebox { flex: 1; position: relative; border: 1px solid #b5bbc3; border-left: 0; border-bottom: 0; margin-right: 2px;
  background: repeating-linear-gradient(#fff 0 23px, #f5f5f5 23px 46px) 0 31px; }
.tree, .ctx, .hint { font-family: "Noto Sans", sans-serif; }
.tree { width: 100%; border-collapse: separate; border-spacing: 0; table-layout: fixed; }
.tree th { height: 31px; padding: 0 5px; background: #eff2f5; border-bottom: 1px solid #b5bbc3; border-right: 1px solid #b5bbc3; font-weight: 400; text-align: left; }
.tree .c2 { width: 125px; }
.tree .c3 { width: 14px; }
.tree td { height: 23px; padding: 0; border-right: 1px solid #d0d3da; border-bottom: 1px solid #ededed; white-space: nowrap; overflow: hidden; }
.tree tr:nth-child(odd) td { background: #fff; }
.tree tr:nth-child(even) td { background: #f5f5f5; }
.tree td svg, .tree td .tw, .tree td .dash { display: inline-block; vertical-align: middle; margin-right: 5px; }
.tree .tw { width: 14px; height: 10px; }
.tree .closed { height: 14px; }
.tree .d0 { padding-left: 6px; }
.tree .d1 { padding-left: 3px; }
.tree .d1 .tw { margin-right: 7px; }
.tree .d2 { padding-left: 20px; }
.tree .d2 .tw { margin-right: 8px; }
.tree .d3 { padding-left: 60px; }
.tree .dash { width: 20px; margin-right: 3px; border-top: 1px dashed #bbb; }
.tree .sel td:not(:last-child) { border-top: 1px solid #b8823c; border-bottom: 1px solid #b8823c; background: #fdecb2; border-right: 0; line-height: 18px; }
.tree .sel .d1 { background: linear-gradient(90deg, #fff 18px, #b8823c 18px 19px, #fdecb2 19px); }

.note { position: absolute; color: #ed1c24; font-weight: 700; font-size: 17px; }
.note1 { left: 103px; top: 103px; }
.note2 { left: 413px; top: 127px; }

.ctx { position: absolute; left: 98px; top: 127px; width: 313px; padding: 2px 4px 2px 2px; display: flex; flex-direction: column;
  background: linear-gradient(90deg, #fff 30px, #dcdfe4 30px 31px, #fff 31px); border: 1px solid #aab0b8; box-shadow: 2px 2px 2px rgba(0, 0, 0, .5); z-index: 2; }
.ctx button { height: 26px; padding-left: 5px; gap: 11px; justify-content: flex-start; }
.ctx button.hot { background: #feedb8; box-shadow: inset 0 0 0 5px #ed1c24; height: 28px; margin: -2px -1px -1px -4px; padding-left: 9px; }
.ctx button.plain { height: 24px; padding-left: 34px; }
.ctx hr { width: 276px; margin: 3px 0 5px 28px; border: 0; border-top: 1px solid #b5bbc3; }

/* documents and viewport */
.center { display: flex; flex-direction: column; min-width: 0; min-height: 0; border-left: 1px solid #b5bbc3; }
.docs { display: flex; align-items: stretch; height: 28px; flex: none; border-bottom: 1px solid #b5bbc3; }
.doc { gap: 7px; padding: 0 20px 0 38px; }
.doc.first { padding-left: 3px; }
.doc.on { background: #fcfcfc; border: 1px solid #b5bbc3; border-bottom: 0; height: 28px; padding: 0 18px 0 37px; }
.dtool { width: 36px; }
.plus { width: 14px; height: 14px; }
.docnav { display: flex; gap: 8px; padding: 0 6px; background: #e0e4e8; }
.view { flex: 1; min-height: 0; position: relative; overflow: hidden; background: linear-gradient(#fdfdfd, #9d9d9d); margin-right: 3px; display: flex; flex-direction: column; }
.scene { position: absolute; left: 0; top: 0; width: 100%; height: 100%; }
.axis text { font: 16px "Open Sans", sans-serif; }
.triad text { font: 18px "Open Sans", sans-serif; }
.dim { font: 16px "Noto Sans", sans-serif; fill: #2a0000; }
.mcs { font: 18px "Open Sans", sans-serif; }
.vtools { position: relative; display: flex; align-items: center; height: 30px; margin-left: 208px; }
.vtools .dd { gap: 5px; margin-right: 10px; }
.vtools > button:first-child { margin-right: 10px; }
.vtools .flt { margin-right: 4px; }
select { appearance: none; border: 1px solid #b5bbc3; border-radius: 0; padding: 0 4px;
  background: #fff url("data:image/svg+xml,%3Csvg xmlns='http://www.w3.org/2000/svg' viewBox='0 0 7 5'%3E%3Cpath d='M0 0H7L3.500 5Z' fill='%23444'/%3E%3C/svg%3E") no-repeat right 6px center / 7px 5px; }
.vtools select { width: 167px; height: 25px; margin-right: 5px; }
.hint { position: relative; margin: -2px 0 0 21px; color: #111; white-space: nowrap; }
.measure { position: relative; margin: auto 0 0 4px; font: 19px/24px "Noto Sans", sans-serif; color: #111; }

/* file browser */
.files { display: flex; flex-direction: column; min-height: 0; min-width: 0; overflow: hidden; }
.files .ptitle { padding: 1px 0 0 6px; }
.files .ptitle button:last-child { margin-right: -2px; }
.fbody { flex: 1; min-height: 0; display: flex; overflow: hidden; }
.fmain { flex: 1; display: flex; flex-direction: column; min-width: 0; padding: 0 2px; border: 1px solid #b5bbc3; border-bottom: 0; background: #e0e4e9; }
.fnav { display: flex; gap: 4px; height: 31px; flex: none; }
.fnav button { width: 35px; border: 1px solid #ccd0d5; background: #ededee; }
.fnav .live { background: #fcfcfc; border-color: #b5bbc3; }
.flip { transform: rotate(180deg); }
.up { transform: rotate(90deg); }
.flist { list-style: none; margin: 3px 0 8px; padding: 0; height: 253px; flex: none; border: 1px solid #b5bbc3; background: repeating-linear-gradient(#fff 0 23px, #f5f5f5 23px 46px); }
.flist li { display: flex; align-items: center; height: 23px; gap: 4px; padding-left: 2px; }
.flist .tw { width: 10px; height: 14px; margin-right: 6px; }
.acc { height: 30px; flex: none; justify-content: flex-start; gap: 5px; padding-left: 4px; margin-bottom: 2px; border: 1px solid #b5bbc3; background: #fcfcfc; font-weight: 700; }
.acc.open { margin-bottom: 0; }
.frow { display: flex; gap: 3px; height: 39px; flex: none; padding: 3px 2px 4px; border: solid #b5bbc3; border-width: 0 1px; }
.frow button { width: 53px; gap: 10px; border: 1px solid #b5bbc3; background: #fcfcfc; }
.frow select { flex: 1; min-width: 0; }
.fempty { flex: 1; background: #fff; border: 1px solid #b5bbc3; }
.fname { height: 7px; flex: none; overflow: hidden; padding: 3px 2px 0 112px; }
.fname input { width: 100%; height: 22px; border: 1px solid #b5bbc3; background: #fff; }
.rstrip { width: 29px; display: flex; flex-direction: column; overflow: hidden; }
.rstrip button { height: 60px; flex: none; justify-content: flex-start; padding-left: 4px; }
.rstrip .on { height: 58px; background: #fcfcfc; border: solid #b5bbc3; border-width: 1px 0; }
.output { height: 101px; flex: none; display: flex; flex-direction: column; border: 1px solid #6d7278; border-width: 1px 0 0 1px; }
.otitle { display: flex; align-items: center; height: 29px; flex: none; gap: 10px; padding: 1px 0 0 6px; border-bottom: 1px solid #b5bbc3; }
.otitle h2 { flex: 1; margin: 0; font-size: 14px; line-height: 20px; }
.otitle button:last-child { margin-right: -2px; }
.obody { flex: 1; min-height: 0; display: flex; overflow: hidden; margin-left: 2px; background: #fff; border-left: 1px solid #b5bbc3; }
.olog { flex: 1; display: flex; flex-direction: column; justify-content: flex-end; padding: 0 0 3px 4px; color: #111; white-space: nowrap; }
.olog p { margin: 0; }
.oscroll { width: 15px; display: flex; flex-direction: column; align-items: center; justify-content: space-between; padding: 7px 0; background: #dde1e8; overflow: hidden; }
.upc { transform: rotate(180deg); }
.thumb { width: 15px; height: 11px; margin-top: 22px; border: 1px solid #888; background: #f2f2f2; }
```
